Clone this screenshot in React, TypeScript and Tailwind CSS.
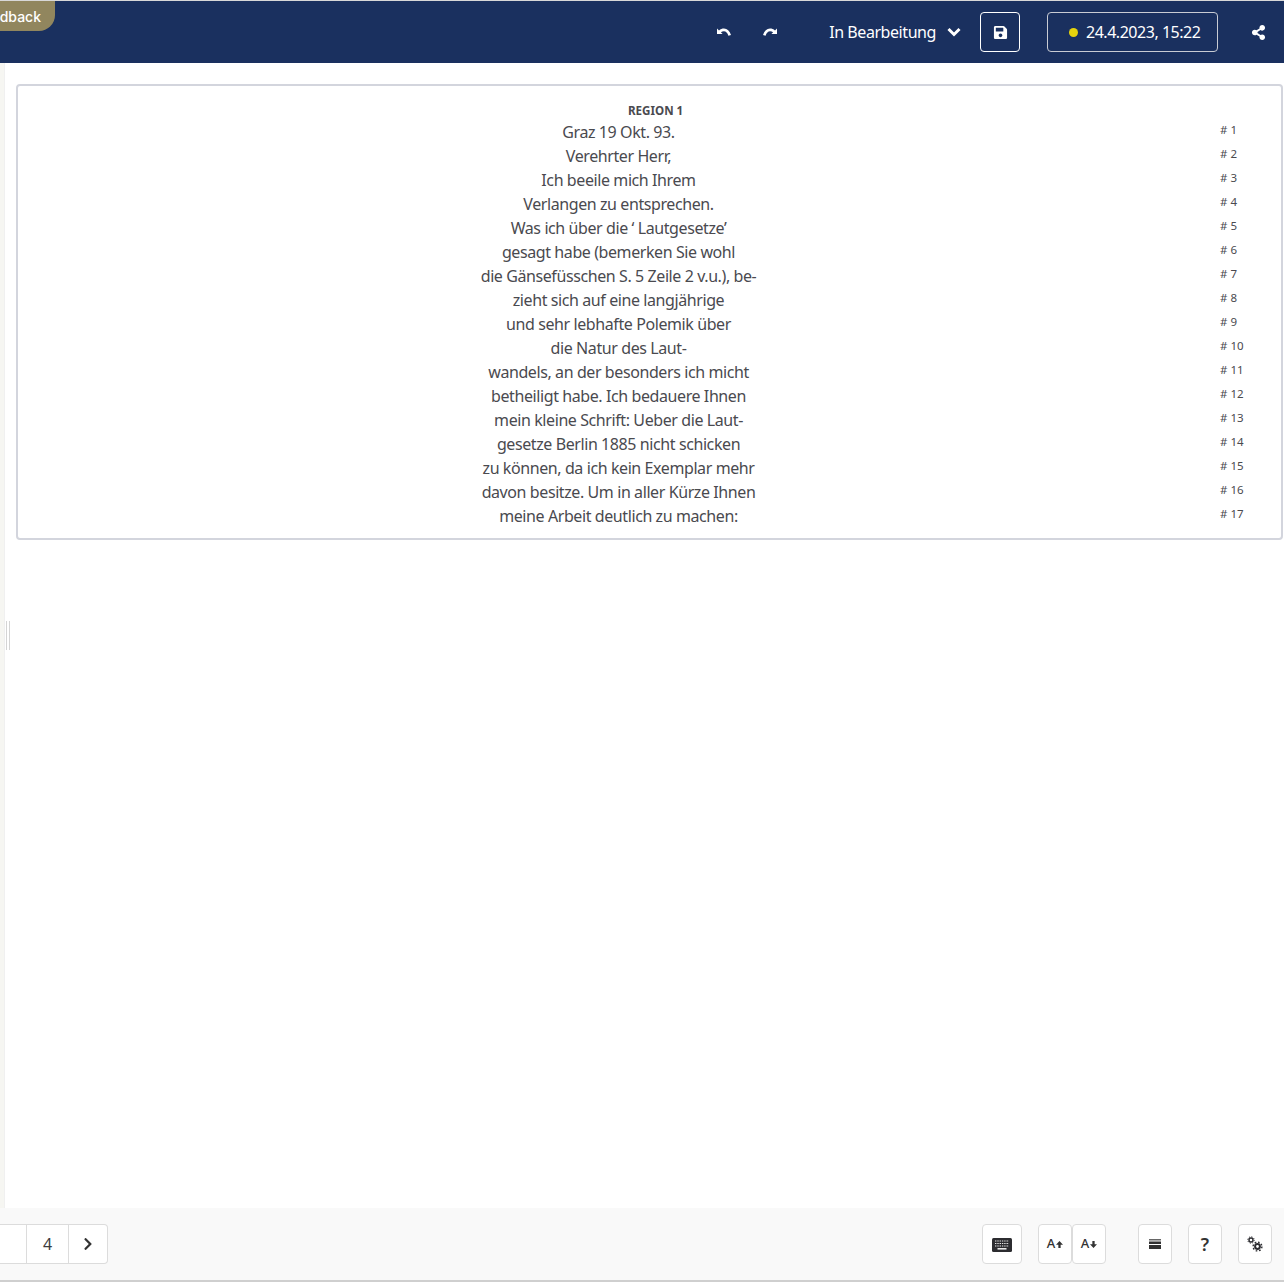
import { FaChevronRight, FaSave, FaShareAlt } from "react-icons/fa";

const lines = [
  "Graz 19 Okt. 93.",
  "Verehrter Herr,",
  "Ich beeile mich Ihrem",
  "Verlangen zu entsprechen.",
  "Was ich über die ‘ Lautgesetze’",
  "gesagt habe (bemerken Sie wohl",
  "die Gänsefüsschen S. 5 Zeile 2 v.u.), be-",
  "zieht sich auf eine langjährige",
  "und sehr lebhafte Polemik über",
  "die Natur des Laut-",
  "wandels, an der besonders ich micht",
  "betheiligt habe. Ich bedauere Ihnen",
  "mein kleine Schrift: Ueber die Laut-",
  "gesetze Berlin 1885 nicht schicken",
  "zu können, da ich kein Exemplar mehr",
  "davon besitze. Um in aller Kürze Ihnen",
  "meine Arbeit deutlich zu machen:",
];

const toolBtn = "flex h-10 items-center justify-center rounded-[4px] border border-[#dcdcdc] bg-white text-[#333]";

const UndoIcon = ({ flip }: { flip?: boolean }) => (
  <svg viewBox="0 0 14 10" className={`h-[10px] w-[14px] fill-white ${flip ? "-scale-x-100" : ""}`}>
    <path d="M0 1.5 2 3.4C3.5 2.2 5.2 1.6 7 1.6c3.2 0 5.7 2.2 7 6.4l-2.6.8C10.5 5.8 9 4.3 6.9 4.3c-1.1 0-2.1.4-3 1L5.6 7H0Z" />
  </svg>
);

const CogIcon = () => (
  <svg viewBox="0 0 16 16" className="h-4 w-4 fill-none stroke-[#2c2c30]">
    <circle cx="4" cy="4" r="2" strokeWidth="1.4" />
    <circle cx="4" cy="4" r="3.2" strokeWidth="1" strokeDasharray="1.2 1.3" />
    <circle cx="10.5" cy="10.5" r="2.4" strokeWidth="2" />
    <circle cx="10.5" cy="10.5" r="4.4" strokeWidth="1.4" strokeDasharray="1.7 1.75" />
  </svg>
);

const App = () => {
  return (
    <div className="flex h-[1282px] w-[1284px] flex-col overflow-hidden bg-white font-['Noto_Sans',sans-serif] text-[#4a4a4f]">
      <div className="h-px bg-[#d8d8d8]" />
      <header className="relative flex h-[62px] items-center bg-[#1a305f] text-white">
        <div className="absolute top-0 left-0 flex h-[30px] w-[55px] items-center justify-end rounded-br-[16px] bg-[#91865e] pt-[1px] pr-[14px] font-['Inter',sans-serif] text-sm font-medium text-white">
          dback
        </div>
        <div className="ml-auto flex items-center">
          <UndoIcon />
          <div className="ml-[32px]">
            <UndoIcon flip />
          </div>
          <span className="ml-[52px] text-base leading-6 tracking-[-0.43px]">In Bearbeitung</span>
          <svg viewBox="0 0 14 10" className="ml-[11px] h-[10px] w-[14px] fill-none stroke-white stroke-[3]">
            <path d="M1.5 2 7 7.5 12.5 2" />
          </svg>
          <div className="ml-[19px] flex h-10 w-10 items-center justify-center rounded-[4px] border border-white">
            <FaSave className="h-[15px] w-[15px]" />
          </div>
          <div className="ml-[27px] flex h-10 w-[171px] items-center rounded-[4px] border border-[#c9ccd4] pl-[21px]">
            <span className="h-[9px] w-[9px] rounded-full bg-[#e6d30c]" />
            <span className="ml-2 text-base leading-6 tracking-[-0.47px]">24.4.2023, 15:22</span>
          </div>
          <FaShareAlt className="mr-[18px] ml-[33px] h-[15px] w-[15px]" />
        </div>
      </header>

      <main className="flex min-h-0 flex-1">
        <div className="relative w-[5px] border-r border-[#f0f0f0] bg-[#f6f6f2]">
          <div className="absolute top-[558px] left-[6px] h-[29px] w-[4px] border-x border-[#d4d4d4]" />
        </div>
        <div className="flex-1 pt-[21px] pr-[1px] pl-[11px]">
          <section className="h-[456px] rounded-[4px] border-2 border-[#d3d5dd] bg-white pt-[15px]">
            <h2 className="pl-[610px] text-[11.6px] leading-[19px] font-bold">REGION 1</h2>
            <div className="flex flex-col">
              {lines.map((line, key) => (
                <div key={key} className="flex h-6">
                  <span className="w-[1201px] text-center text-base leading-6 tracking-[-0.41px]">{line}</span>
                  <span className="pl-[1px] text-[11.5px] leading-5"># {key + 1}</span>
                </div>
              ))}
            </div>
          </section>
        </div>
      </main>

      <footer className="flex h-[74px] shrink-0 items-center border-b-2 border-[#cfcfcf] bg-[#f9f9f9]">
        <div className="flex h-10 w-[108px] items-center justify-end rounded-r-[4px] border border-l-0 border-[#dcdcdc] bg-white">
          <span className="flex h-full w-[43px] items-center justify-center border-x border-[#dcdcdc] text-base text-[#3c3c40]">4</span>
          <span className="flex w-[38px] items-center justify-center text-[#333]">
            <FaChevronRight className="h-[14px] w-[14px]" />
          </span>
        </div>
        <div className="ml-auto flex items-center pr-3">
          <div className={`${toolBtn} w-10`}>
            <svg viewBox="0 0 20 14" className="mt-[1px] h-[14px] w-5">
              <rect width="20" height="14" rx="1.5" fill="#2c2c30" />
              <path d="M3 3h14M3 5.5h14M3 8h14" stroke="#e8e8e8" strokeWidth="1.2" strokeDasharray="1.4 0.9" fill="none" />
              <rect x="5.5" y="10" width="9" height="1.6" fill="#e8e8e8" />
            </svg>
          </div>
          <div className={`${toolBtn} ml-4 w-[34px] text-[13px] font-medium`}>
            A
            <svg viewBox="0 0 8 8" className="ml-px h-[7px] w-[7px] fill-current">
              <path d="M4 0 8 4.2H5.3V8H2.7V4.2H0Z" />
            </svg>
          </div>
          <div className={`${toolBtn} w-[34px] text-[13px] font-medium`}>
            A
            <svg viewBox="0 0 8 8" className="ml-px h-[7px] w-[7px] fill-current">
              <path d="M4 8 8 3.8H5.3V0H2.7V3.8H0Z" />
            </svg>
          </div>
          <div className={`${toolBtn} ml-8 w-[34px]`}>
            <svg viewBox="0 0 12 10" className="h-[10px] w-3 fill-current">
              <rect y="0" width="12" height="1.5" opacity="0.75" />
              <rect y="2.5" width="12" height="2.5" />
              <rect y="6" width="12" height="4" />
            </svg>
          </div>
          <div className={`${toolBtn} ml-4 w-[34px] text-lg font-semibold`}>?</div>
          <div className={`${toolBtn} ml-4 w-[34px]`}>
            <CogIcon />
          </div>
        </div>
      </footer>
    </div>
  );
};

export default App;
